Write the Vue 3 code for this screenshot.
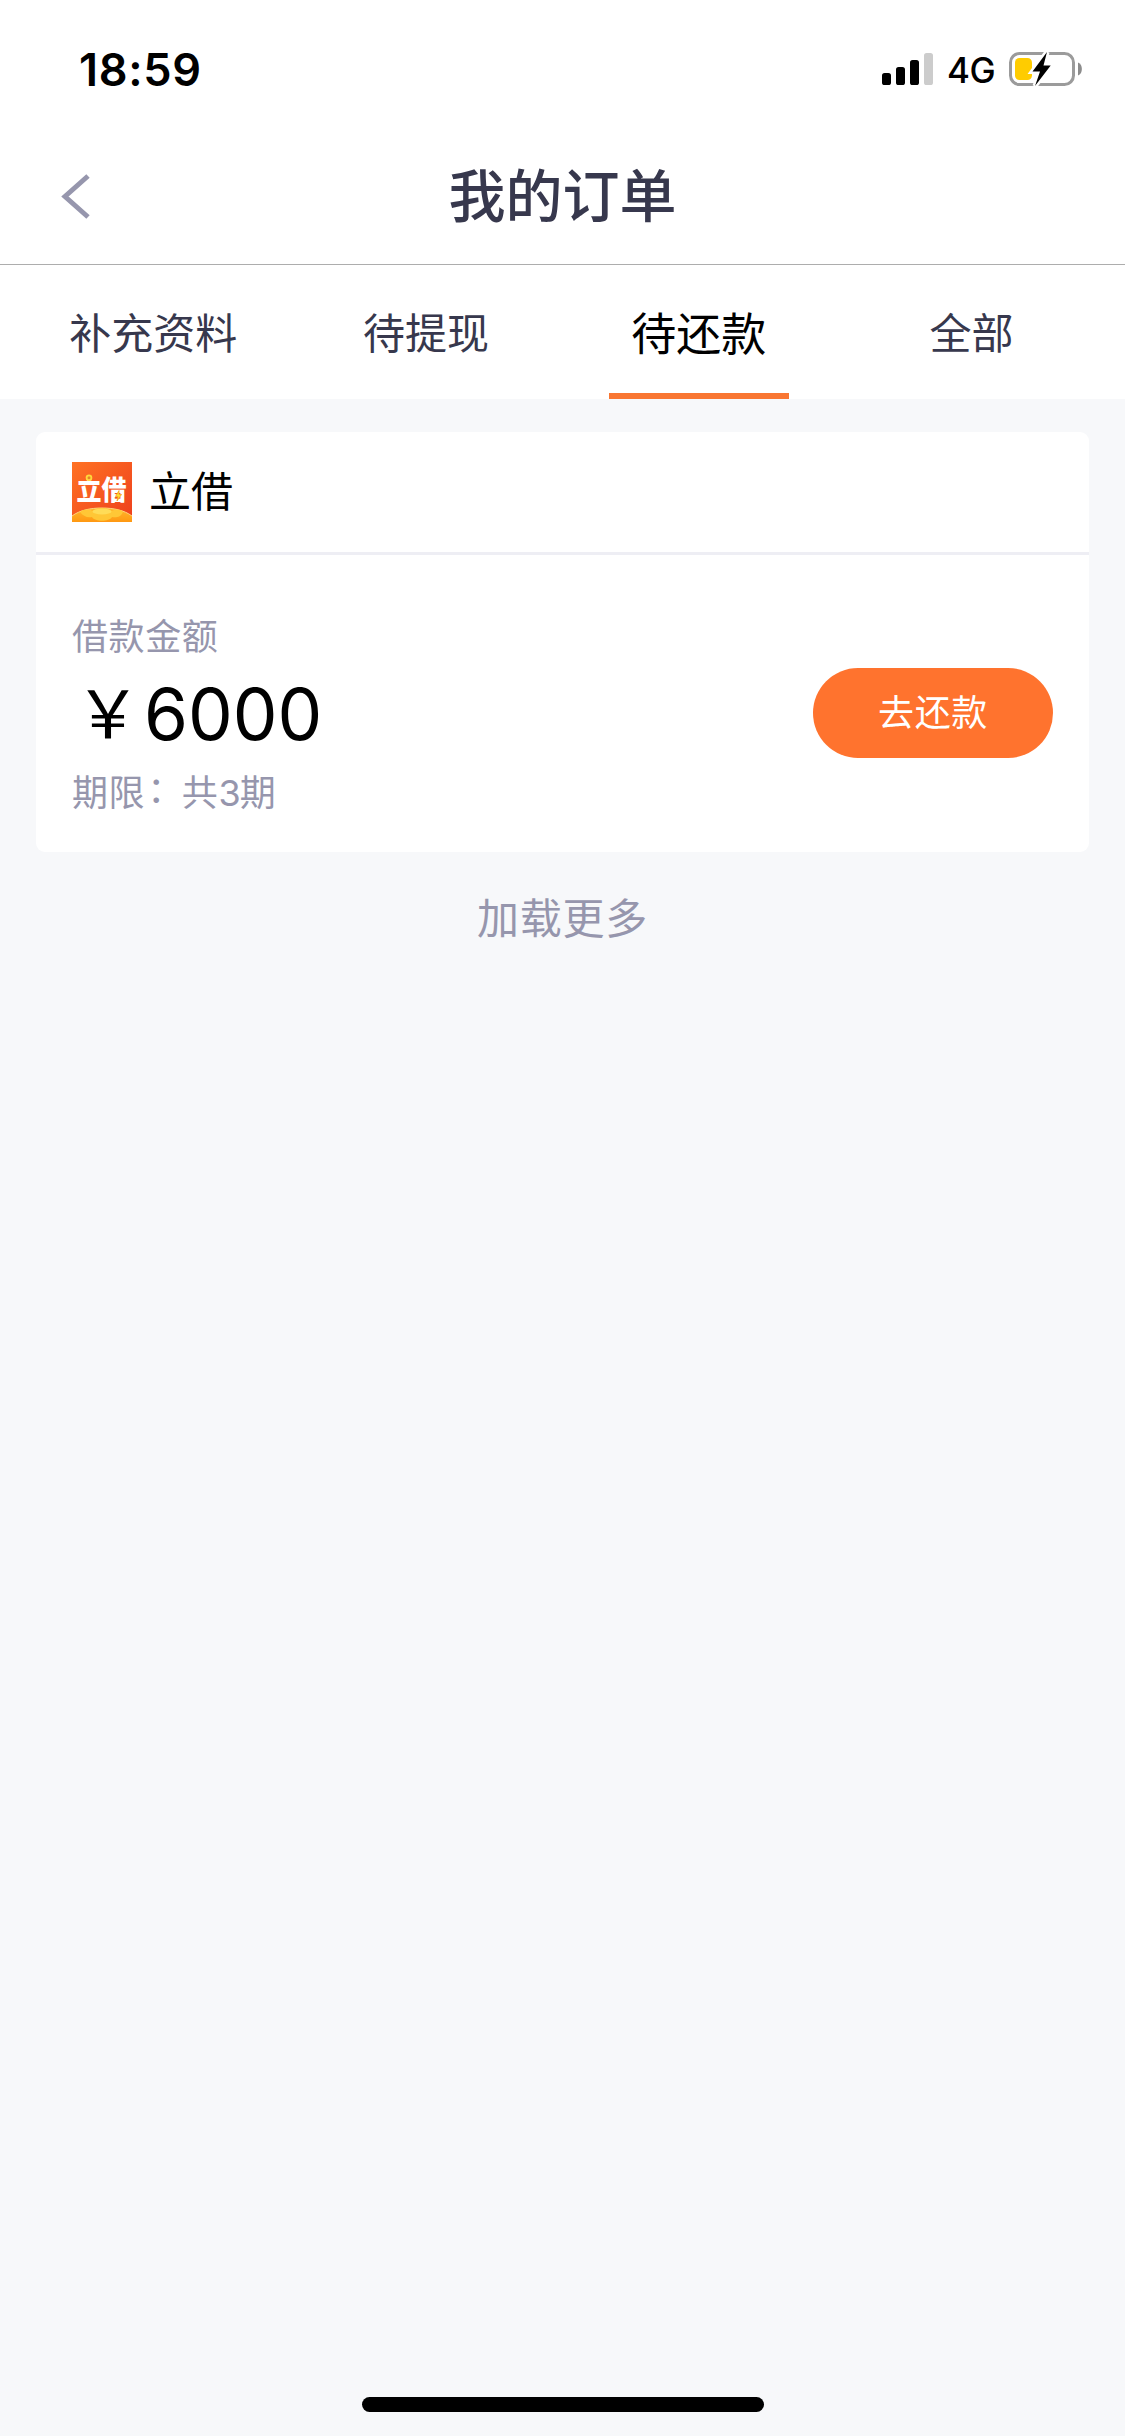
<script setup>
const tabs = [
  { label: '补充资料' },
  { label: '待提现' },
  { label: '待还款', active: true },
  { label: '全部' }
]
</script>

<template>
  <div class="page">
    <div class="status">
      <span class="time">18:59</span>
      <div class="indicators">
        <svg class="signal" width="51" height="32" viewBox="0 0 51 32">
          <rect x="0" y="20" width="9" height="12" rx="2.6" />
          <rect x="14" y="14" width="9" height="18" rx="2.6" />
          <rect x="28" y="7" width="9" height="25" rx="2.6" />
          <rect x="42" y="0" width="9" height="32" rx="2.6" fill="#ccc" />
        </svg>
        <span class="network">4G</span>
        <svg class="battery" width="74" height="36" viewBox="0 0 74 36">
          <rect x="1.5" y="2.5" width="63" height="31" rx="9" fill="none" stroke="#9b9b9b" stroke-width="3" />
          <path d="M69 11.5c5.200 1.800 5.200 11.200 0 13z" fill="#8c8c8c" />
          <rect x="6" y="7" width="17" height="22" rx="4.500" fill="#fc0" />
          <path d="M38 1 23.500 20.500h7.500L26 35l15.700-20.500h-7.200z" fill="#000" stroke="#fff" stroke-width="5" paint-order="stroke" />
        </svg>
      </div>
    </div>

    <header class="nav">
      <svg class="back" width="30" height="46" viewBox="0 0 30 46">
        <path d="M27 2 4 22.500 27 43" fill="none" stroke="#9696ad" stroke-width="5" />
      </svg>
      <h1>我的订单</h1>
    </header>

    <nav class="tabs">
      <div v-for="t in tabs" :key="t.label" class="tab" :class="{ active: t.active }">
        <span>{{ t.label }}</span>
      </div>
    </nav>

    <section class="card">
      <div class="brand">
        <svg class="logo" width="60" height="60" viewBox="0 0 60 60">
          <defs>
            <linearGradient id="bg" x1="0" y1="0" x2="1" y2="1">
              <stop offset="0" stop-color="#ff7223" />
              <stop offset="1" stop-color="#ed3f1d" />
            </linearGradient>
            <linearGradient id="gold" x1="0" y1="0" x2="0" y2="1">
              <stop offset="0" stop-color="#ffb92e" />
              <stop offset="1" stop-color="#ff9812" />
            </linearGradient>
          </defs>
          <rect width="60" height="60" fill="url(#bg)" />
          <text transform="translate(29.500 38) scale(1 1.080)" class="logo-text">立借</text>
          <circle cx="17" cy="15.800" r="2.400" fill="#e9832a" stroke="#ffd83b" stroke-width="1.800" />
          <path d="M47 28.500 43.500 34.500h2.500L45 39l4.500-6.500H47z" fill="#ffe02e" stroke="#f5a11c" stroke-width=".8" />
          <path d="M0 54C8 48 19 46 30 46s22 2 30 8v6H0z" fill="url(#gold)" />
          <path d="M0 54C8 48 19 46 30 46s22 2 30 8" fill="none" stroke="#ffd47e" stroke-width="1" />
          <path d="M8 50c4-3 10-3 12-1 6-4 14-4 20 0 4-2 8-2 11 1-2 5-7 6-11 5-3 5-17 5-20 0-5 1-9-1-12-5z" fill="#ffc736" />
          <ellipse cx="30" cy="49.500" rx="9.500" ry="3" fill="#ffdc57" />
        </svg>
        <span class="brand-name">立借</span>
      </div>
      <div class="order">
        <div class="details">
          <div class="label">借款金额</div>
          <div class="amount"><span class="yen">￥</span><span class="num">6000</span></div>
          <div class="label">期限<span class="colon">：</span>共<span class="count">3</span>期</div>
        </div>
        <button class="repay">去还款</button>
      </div>
    </section>

    <div class="more">加载更多</div>
    <div class="home"></div>
  </div>
</template>

<style>
body {
  margin: 0;
}
</style>

<style scoped>
.page {
  width: 1125px;
  height: 2436px;
  display: flex;
  flex-direction: column;
  background: #f7f8fa;
  color: #000;
  font-family: Inter, "Noto Sans CJK SC", sans-serif;
  overflow: hidden;
}
.status {
  height: 132px;
  flex: none;
  display: flex;
  justify-content: space-between;
  box-sizing: border-box;
  padding: 0 42px 0 79px;
  background: #fff;
}
.time {
  font-size: 45px;
  font-weight: 600;
  line-height: 139px;
  letter-spacing: 0.7px;
}
.indicators {
  display: flex;
  align-items: flex-start;
}
.signal {
  margin-top: 53px;
}
.network {
  margin-left: 14px;
  width: 62px;
  font-size: 35px;
  font-weight: 500;
  line-height: 141px;
  letter-spacing: -0.5px;
}
.battery {
  margin-top: 51px;
}
.nav {
  height: 133px;
  flex: none;
  box-sizing: border-box;
  display: grid;
  grid-template-columns: 62px 1fr 62px;
  background: #fff;
  border-bottom: 1px solid #adadad;
}
.back {
  margin: 42px 0 0 61px;
}
h1 {
  margin: 0;
  text-align: center;
  color: #37384d;
  font-size: 57px;
  font-weight: 500;
  line-height: 129px;
}
.tabs {
  height: 134px;
  flex: none;
  display: flex;
  padding: 0 17px;
  background: #fff;
}
.tab {
  flex: 1;
  display: flex;
  justify-content: center;
  color: #37384d;
  font-size: 42px;
  line-height: 137px;
}
.tab span {
  width: 180px;
  height: 128px;
  text-align: center;
  white-space: nowrap;
}
.tab.active {
  color: #000;
  font-size: 45px;
  line-height: 139px;
}
.tab.active span {
  border-bottom: 6px solid #f97632;
}
.card {
  flex: none;
  height: 420px;
  margin: 33px 36px 0;
  border-radius: 9px;
  background: #fff;
}
.brand {
  height: 120px;
  display: flex;
  align-items: center;
  padding-left: 36px;
  border-bottom: 3px solid #eeeef4;
}
.logo-text {
  fill: #fff;
  font-size: 25px;
  font-weight: 900;
  text-anchor: middle;
}
.brand-name {
  margin-left: 17px;
  font-size: 42px;
  line-height: 62px;
}
.order {
  height: 297px;
  display: flex;
  align-items: flex-start;
  justify-content: space-between;
  padding: 0 36px;
}
.details {
  padding-top: 55px;
}
.label {
  height: 54px;
  color: #9696ad;
  font-size: 36px;
  line-height: 54px;
  letter-spacing: 0.6px;
}
.colon {
  display: inline-block;
  transform: translate(2px, -3px);
}
.count {
  letter-spacing: -1px;
}
.amount {
  height: 102px;
  display: flex;
  font-size: 71px;
  line-height: 100px;
}
.yen {
  width: 72px;
  text-align: center;
  font-size: 66px;
}
.repay {
  width: 240px;
  height: 90px;
  margin-top: 113px;
  padding: 0;
  border: 0;
  border-radius: 45px;
  background: #ff732e;
  color: #fff;
  font-family: inherit;
  font-size: 36px;
  line-height: 90px;
  letter-spacing: 0.6px;
}
.more {
  margin-top: 33px;
  text-align: center;
  color: #9696ad;
  font-size: 42px;
  line-height: 68px;
  letter-spacing: 0.8px;
}
.home {
  width: 402px;
  height: 15px;
  margin: auto auto 24px;
  border-radius: 8px;
  background: #000;
}
</style>
